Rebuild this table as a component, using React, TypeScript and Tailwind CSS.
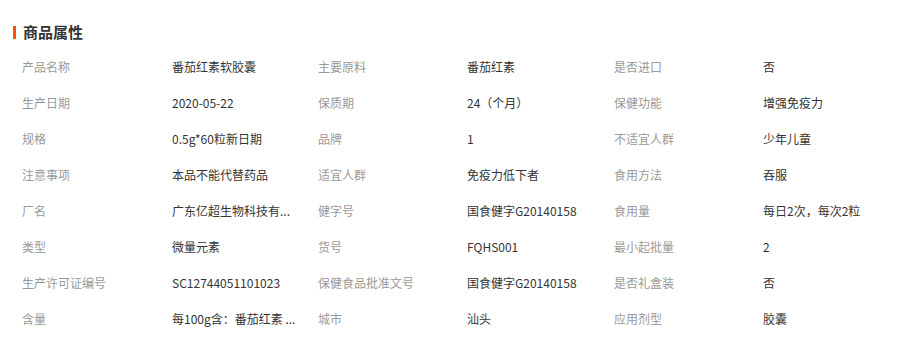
const rows: [string, string, string, string, string, string][] = [
  ['产品名称', '番茄红素软胶囊', '主要原料', '番茄红素', '是否进口', '否'],
  ['生产日期', '2020-05-22', '保质期', '24（个月）', '保健功能', '增强免疫力'],
  ['规格', '0.5g*60粒新日期', '品牌', '1', '不适宜人群', '少年儿童'],
  ['注意事项', '本品不能代替药品', '适宜人群', '免疫力低下者', '食用方法', '吞服'],
  ['厂名', '广东亿超生物科技有...', '健字号', '国食健字G20140158', '食用量', '每日2次，每次2粒'],
  ['类型', '微量元素', '货号', 'FQHS001', '最小起批量', '2'],
  ['生产许可证编号', 'SC12744051101023', '保健食品批准文号', '国食健字G20140158', '是否礼盒装', '否'],
  ['含量', '每100g含：番茄红素 ...', '城市', '汕头', '应用剂型', '胶囊'],
]

export default function App() {
  return (
    <div className="w-[911px] h-[344px] bg-white" style={{ fontFamily: '"Microsoft YaHei", "Noto Sans CJK SC", sans-serif' }}>
      <div className="flex items-center pt-[22px] pl-[13px] h-[42px]">
        <span className="w-[3px] h-[13px] bg-[#ff5000]" />
        <span className="ml-[7px] text-[15px] font-bold text-[#333] leading-[20px]">商品属性</span>
      </div>
      <div className="pl-[22px] pt-[7px] grid grid-cols-[150px_146px_149px_147px_149px_auto] text-[12px] leading-[36px]">
        {rows.map((r, i) => (
          <div key={i} className="contents">
            <div className="text-[#999]">{r[0]}</div>
            <div className="text-[#333] whitespace-nowrap">{r[1]}</div>
            <div className="text-[#999]">{r[2]}</div>
            <div className="text-[#333] whitespace-nowrap">{r[3]}</div>
            <div className="text-[#999]">{r[4]}</div>
            <div className="text-[#333] whitespace-nowrap">{r[5]}</div>
          </div>
        ))}
      </div>
    </div>
  )
}
